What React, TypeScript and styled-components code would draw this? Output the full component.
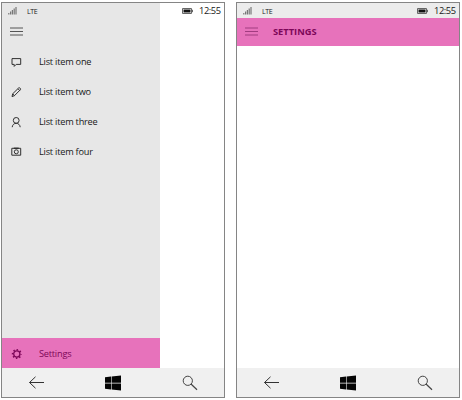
import React from "react";
import styled, { createGlobalStyle } from "styled-components";

const Global = createGlobalStyle`
  * { box-sizing: border-box; }
  body { margin: 0; background: #fff; font-family: "Open Sans", "Noto Sans", sans-serif; color: #181818; }
  svg { display: block; flex: none; }
`;

const Stage = styled.main`
  display: flex;
  gap: 11px;
  width: 462px;
  height: 400px;
  padding: 2px 1px 2px;
`;

const Phone = styled.section`
  display: grid;
  grid-template: 15px 1fr 29px / 158px 1fr;
  width: 224px;
  height: 396px;
  border: 1px solid #858585;
  background: #fff;
`;

const StatusBar = styled.header<{ $fill?: string }>`
  grid-area: 1 / 1 / 2 / 3;
  z-index: 1;
  display: flex;
  align-items: center;
  padding: 1px 2px 0 6px;
  background: ${(p) => p.$fill ?? "transparent"};
`;

const Carrier = styled.span`
  margin-left: 10px;
  flex: 1;
  font-size: 7px;
  letter-spacing: -0.4px;
  line-height: 10px;
  padding-top: 2px;
`;

const Clock = styled.time`
  margin-left: 6px;
  width: 23px;
  font-size: 9.3px;
  letter-spacing: -0.4px;
  line-height: 12px;
  white-space: nowrap;
`;

const Pane = styled.nav`
  grid-area: 1 / 1 / 3 / 2;
  display: flex;
  flex-direction: column;
  padding-top: 15px;
  background: #e7e7e7;
`;

const MenuButton = styled.div`
  display: flex;
  height: 28px;
  padding: 9px 0 0 8px;
`;

const Item = styled.div<{ $active?: boolean }>`
  display: flex;
  align-items: center;
  gap: 16px;
  height: 30px;
  padding: 1px 0 0 8px;
  font-size: 9.2px;
  letter-spacing: -0.22px;
  line-height: 14px;
  color: ${(p) => (p.$active ? "#7d0759" : "#181818")};
  background: ${(p) => (p.$active ? "#e772bb" : "transparent")};
  margin-top: ${(p) => (p.$active ? "auto" : "0")};
`;

const TitleBar = styled.header`
  grid-area: 2 / 1 / 3 / 3;
  display: flex;
  align-items: center;
  gap: 15px;
  height: 28px;
  padding: 0 0 1px 8px;
  background: #e772bb;
  color: #7d0759;
`;

const Title = styled.h1`
  margin: 0;
  font-size: 9.3px;
  font-weight: 700;
  letter-spacing: 0;
  line-height: 14px;
`;

const NavBar = styled.footer`
  grid-area: 3 / 1 / 4 / 3;
  display: flex;
  align-items: center;
  justify-content: space-between;
  padding: 0 26px;
  background: #f0f0f0;
`;

const Signal = () => (
  <svg width="9" height="8" viewBox="0 0 9 8">
    <path d="M.8 7.5V6M2.6 7.5V4.5M4.4 7.5V3M6.2 7.5V1.5M8 7.5V0" stroke="#777" strokeWidth="1.2" />
  </svg>
);

const Battery = () => (
  <svg width="11" height="6" viewBox="0 0 11 6">
    <path d="M.5.5h9v5h-9zM10.5 1.8v2.4" fill="none" stroke="#666" />
    <path d="M1.5 1.5h7v3h-7z" fill="#111" />
  </svg>
);

const Burger = ({ color }: { color: string }) => (
  <svg width="13" height="9" viewBox="0 0 13 9">
    <path d="M0 1h13M0 4.5h13M0 8h13" stroke={color} strokeWidth="1" />
  </svg>
);

const glyphs: Record<string, React.ReactNode> = {
  comment: <path d="M2 2.6h8.7v5.8H6.2L4.2 10.4v-2H2z" />,
  pencil: <path d="M2 10.6l.7-2.8 6-5.9c.7-.7 2.5.9 1.8 1.7l-6 6zM2.7 7.9l1.9 1.8M8 2.8l1.8 1.8" />,
  person: (
    <>
      <circle cx="6.2" cy="4.4" r="2.9" />
      <path d="M2.2 11.2c.2-2.3 1.8-3.9 4-3.9s3.8 1.6 4 3.9" />
    </>
  ),
  camera: (
    <>
      <path d="M1.8 2.3h8.9v6.9H1.8z" />
      <circle cx="6.3" cy="5.8" r="2" />
      <path d="M3.8 2.3h4.9" strokeWidth="1.4" />
    </>
  ),
  gear: (
    <>
      <circle cx="6.8" cy="6" r="3.1" strokeWidth="1.3" />
      <circle cx="6.8" cy="6" r="4.2" strokeWidth="1.6" strokeDasharray="1.45 1.849" strokeDashoffset=".72" />
    </>
  ),
};

const Glyph = ({ name, color = "#303030" }: { name: string; color?: string }) => (
  <svg width="13" height="12" viewBox="0 0 13 12" fill="none" stroke={color} strokeWidth="1">
    {glyphs[name]}
  </svg>
);

const Back = () => (
  <svg width="16" height="14" viewBox="0 0 16 14" fill="none" stroke="#333" strokeWidth="1">
    <path d="M16 6.5H1.5M7.5 .8L1.5 6.5l6 5.7" />
  </svg>
);

const Windows = () => (
  <svg width="16" height="16" viewBox="0 0 16 16">
    <path d="M0 2.3l6-.8v6.2H0zM6.6 1.4l9.4-1v7.3H6.6zM0 8.4h6v6l-6-.7zM6.6 8.4H16v7.2l-9.4-1z" fill="#050505" />
  </svg>
);

const Search = () => (
  <svg width="16" height="16" viewBox="0 0 16 16" fill="none" stroke="#444" strokeWidth="1">
    <circle cx="5.8" cy="5.8" r="4.6" />
    <path d="M9 9l6 5.8" strokeWidth="1.2" />
  </svg>
);

const Status = ({ fill }: { fill?: string }) => (
  <StatusBar $fill={fill}>
    <Signal />
    <Carrier>LTE</Carrier>
    <Battery />
    <Clock>12:55</Clock>
  </StatusBar>
);

const SystemNav = () => (
  <NavBar>
    <Back />
    <Windows />
    <Search />
  </NavBar>
);

const items = [
  ["comment", "List item one"],
  ["pencil", "List item two"],
  ["person", "List item three"],
  ["camera", "List item four"],
];

export default function App() {
  return (
    <>
      <Global />
      <Stage>
        <Phone>
          <Status />
          <Pane>
            <MenuButton>
              <Burger color="#555" />
            </MenuButton>
            {items.map(([icon, label]) => (
              <Item key={label}>
                <Glyph name={icon} />
                {label}
              </Item>
            ))}
            <Item $active>
              <Glyph name="gear" color="#7d0759" />
              Settings
            </Item>
          </Pane>
          <SystemNav />
        </Phone>
        <Phone>
          <Status fill="#ececec" />
          <TitleBar>
            <Burger color="#a13c80" />
            <Title>SETTINGS</Title>
          </TitleBar>
          <SystemNav />
        </Phone>
      </Stage>
    </>
  );
}
